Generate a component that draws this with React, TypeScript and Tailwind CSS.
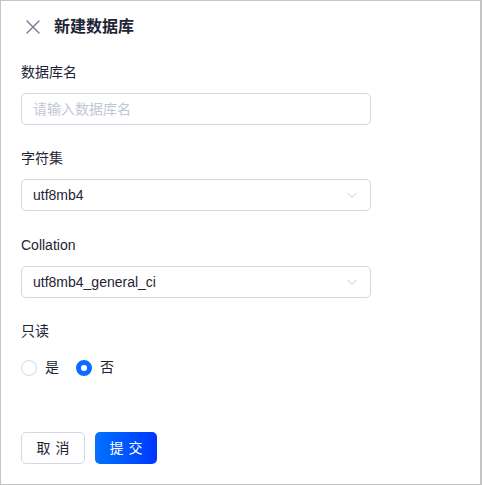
import React from "react";

const font = { fontFamily: '"Liberation Sans", "Noto Sans CJK SC", sans-serif' };

function Chevron() {
  return (
    <svg width="12" height="12" viewBox="0 0 12 12" fill="none" className="text-[#c3c9d5]">
      <path d="M1.5 4 L6 8.5 L10.5 4" stroke="currentColor" strokeWidth="1" strokeLinecap="round" strokeLinejoin="round" />
    </svg>
  );
}

function Select({ value }: { value: string }) {
  return (
    <div className="mt-[11px] flex h-[32px] w-[350px] items-center justify-between rounded-[5px] border border-[#d3d9e4] bg-white pl-[11px] pr-[12px] text-[14px] text-[#1d2433]">
      <span>{value}</span>
      <Chevron />
    </div>
  );
}

export default function App() {
  return (
    <div
      className="box-border flex h-[485px] w-[482px] flex-col border border-r-2 border-[#c4c4c4] bg-white pl-[20px]"
      style={font}
    >
      <div className="flex h-[52px] items-center">
        <svg width="16" height="16" viewBox="0 0 16 16" className="ml-[4px] text-[#7a8394]">
          <path d="M2 2 L14 14 M14 2 L2 14" stroke="currentColor" strokeWidth="1.5" strokeLinecap="round" />
        </svg>
        <span className="ml-[13px] text-[16px] font-bold text-[#1d2433]">新建数据库</span>
      </div>

      <div className="mt-[9px] h-[20px] text-[14px] leading-[20px] text-[#1d2433]">数据库名</div>
      <div className="mt-[11px] flex h-[32px] w-[350px] items-center rounded-[5px] border border-[#d3d9e4] pl-[11px] text-[14px] text-[#c0c7d4]">
        请输入数据库名
      </div>

      <div className="mt-[23px] h-[20px] text-[14px] leading-[20px] text-[#1d2433]">字符集</div>
      <Select value="utf8mb4" />

      <div className="mt-[24px] h-[20px] text-[14px] leading-[20px] text-[#1d2433]">Collation</div>
      <Select value="utf8mb4_general_ci" />

      <div className="mt-[23px] h-[20px] text-[14px] leading-[20px] text-[#1d2433]">只读</div>
      <div className="mt-[16px] flex items-center text-[14px] text-[#1d2433]">
        <span className="box-border h-[16px] w-[16px] rounded-full border border-[#d3d9e4]" />
        <span className="ml-[8px]">是</span>
        <span className="ml-[17px] box-border h-[16px] w-[16px] rounded-full border-[5px] border-[#0b6cff] bg-white" />
        <span className="ml-[8px]">否</span>
      </div>

      <div className="mt-[54px] flex gap-[10px]">
        <button className="h-[32px] w-[64px] rounded-[5px] border border-[#d3d9e4] bg-white pl-[5px] text-[14px] tracking-[5px] text-[#1d2433]">
          取消
        </button>
        <button className="h-[32px] w-[62px] rounded-[5px] bg-gradient-to-r from-[#0a70ff] to-[#0033ff] pl-[5px] text-[14px] tracking-[5px] text-white">
          提交
        </button>
      </div>
    </div>
  );
}
